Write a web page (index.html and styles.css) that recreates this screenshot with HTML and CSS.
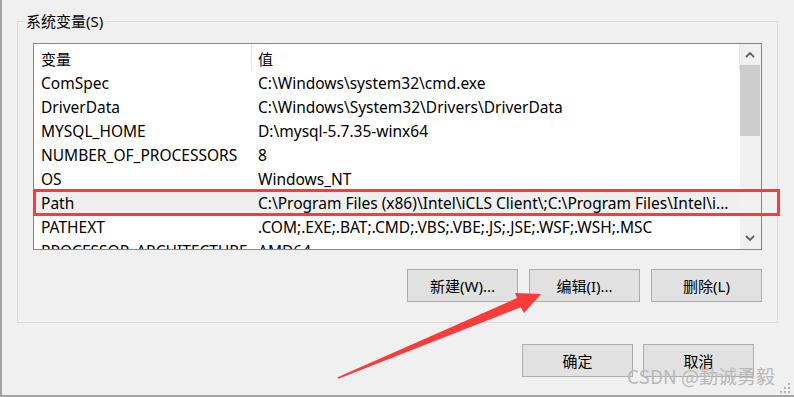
FILE: index.html
```html
<!DOCTYPE html>
<html lang="zh-CN">
<head>
<meta charset="utf-8">
<title>系统变量</title>
<link rel="stylesheet" href="styles.css">
</head>
<body>
<div class="window">
  <div class="group">
    <div class="legend">系统变量(S)</div>
    <div class="listbox">
      <div class="list">
        <div class="head"><div class="c1">变量</div><div class="c2">值</div></div>
        <div class="row"><div class="c1">ComSpec</div><div class="c2">C:\Windows\system32\cmd.exe</div></div>
        <div class="row"><div class="c1">DriverData</div><div class="c2">C:\Windows\System32\Drivers\DriverData</div></div>
        <div class="row"><div class="c1">MYSQL_HOME</div><div class="c2">D:\mysql-5.7.35-winx64</div></div>
        <div class="row"><div class="c1">NUMBER_OF_PROCESSORS</div><div class="c2">8</div></div>
        <div class="row"><div class="c1">OS</div><div class="c2">Windows_NT</div></div>
        <div class="row sel"><div class="c1">Path</div><div class="c2">C:\Program Files (x86)\Intel\iCLS Client\;C:\Program Files\Intel\i...</div></div>
        <div class="row"><div class="c1">PATHEXT</div><div class="c2">.COM;.EXE;.BAT;.CMD;.VBS;.VBE;.JS;.JSE;.WSF;.WSH;.MSC</div></div>
        <div class="row"><div class="c1">PROCESSOR_ARCHITECTURE</div><div class="c2">AMD64</div></div>
      </div>
      <div class="scrollbar">
        <div class="sb-btn"><svg width="10" height="7" viewBox="0 0 10 7"><path d="M1 6 L5 2 L9 6" fill="none" stroke="#606060" stroke-width="1.8"/></svg></div>
        <div class="sb-track"><div class="thumb"></div></div>
        <div class="sb-btn"><svg width="10" height="7" viewBox="0 0 10 7"><path d="M1 1 L5 5 L9 1" fill="none" stroke="#606060" stroke-width="1.8"/></svg></div>
      </div>
    </div>
    <div class="btnrow">
      <div class="btn">新建(W)...</div>
      <div class="btn">编辑(I)...</div>
      <div class="btn">删除(L)</div>
    </div>
  </div>
  <div class="dlgrow">
    <div class="btn">确定</div>
    <div class="btn">取消</div>
  </div>
</div>
<div class="mark"></div>
<svg class="arrow" width="794" height="397" viewBox="0 0 794 397">
  <polygon fill="#f83c3c" points="338.4,378.8 520.8,307.3 524,313 541,294 515,293 517,298.1 337.6,377.2"/>
</svg>
<div class="watermark">CSDN @勤诚勇毅</div>
<svg class="grip" width="12" height="12" viewBox="0 0 12 12">
  <rect x="9" y="1" width="2" height="2" fill="#b4b4b4"/>
  <rect x="5" y="5" width="2" height="2" fill="#b4b4b4"/>
  <rect x="9" y="5" width="2" height="2" fill="#b4b4b4"/>
  <rect x="1" y="9" width="2" height="2" fill="#b4b4b4"/>
  <rect x="5" y="9" width="2" height="2" fill="#b4b4b4"/>
  <rect x="9" y="9" width="2" height="2" fill="#b4b4b4"/>
</svg>
</body>
</html>
```
FILE: styles.css
```css
* { box-sizing: border-box; }
html, body { margin: 0; padding: 0; }
body {
  position: relative;
  width: 794px;
  height: 397px;
  overflow: hidden;
  background: #f0f0f0;
  font-family: "Noto Sans", "Noto Sans CJK SC", sans-serif;
  font-size: 15px;
  color: #000;
}
.window {
  width: 794px;
  height: 397px;
  border-left: 2px solid #a3a3a3;
  border-bottom: 2px solid #a3a3a3;
  padding: 21px 0 0 15px;
}
.group {
  width: 761px;
  border: 1px solid #dcdcdc;
  padding: 0 15px 20px 15px;
}
.legend {
  width: fit-content;
  height: 20px;
  line-height: 20px;
  margin: -11px 0 0 -9px;
  padding: 0 2px;
  background: #f0f0f0;
}
.listbox {
  display: flex;
  margin-top: 12px;
  height: 207px;
  border: 1px solid #828790;
  background: #fff;
}
.list {
  width: 706px;
  flex: none;
  overflow: hidden;
  font-size: 15.5px;
}
.head {
  display: flex;
  height: 27px;
}
.head > div {
  height: 27px;
  padding-top: 3px;
  line-height: 24px;
  font-size: 15px;
}
.head .c2 {
  border-left: 1px solid #e5e5e5;
  border-right: 1px solid #e5e5e5;
  padding-left: 6px;
}
.row {
  display: flex;
  height: 24px;
  line-height: 24px;
}
.row.sel { background: #efefef; }
.c1 {
  width: 217px;
  flex: none;
  padding-left: 7px;
  white-space: nowrap;
  overflow: hidden;
}
.c2 {
  flex: 1;
  padding-left: 7px;
  white-space: nowrap;
  overflow: hidden;
}
.scrollbar {
  width: 21px;
  flex: none;
  display: flex;
  flex-direction: column;
  background: #f0f0f0;
}
.sb-btn {
  height: 21px;
  display: flex;
  align-items: center;
  justify-content: center;
  padding-right: 1px;
}
.sb-track { flex: 1; }
.thumb {
  height: 71px;
  margin-right: 1px;
  background: #cdcdcd;
}
.btnrow {
  display: flex;
  justify-content: flex-end;
  gap: 11px;
  margin-top: 19px;
}
.dlgrow {
  display: flex;
  justify-content: flex-end;
  gap: 10px;
  margin: 21px 40px 0 0;
}
.btn {
  width: 111px;
  height: 33px;
  display: flex;
  align-items: center;
  justify-content: center;
  background: #e1e1e1;
  border: 1px solid #adadad;
}
.mark {
  position: absolute;
  left: 33px;
  top: 189px;
  width: 747px;
  height: 27px;
  border: 3px solid #f83c3c;
}
.arrow {
  position: absolute;
  left: 0;
  top: 0;
  pointer-events: none;
}
.watermark {
  position: absolute;
  left: 627px;
  top: 363px;
  font-family: "Noto Sans CJK SC", sans-serif;
  font-size: 19px;
  line-height: 26px;
  color: #b9b9b9;
  white-space: nowrap;
}
.grip {
  position: absolute;
  left: 779px;
  top: 382px;
}
```
